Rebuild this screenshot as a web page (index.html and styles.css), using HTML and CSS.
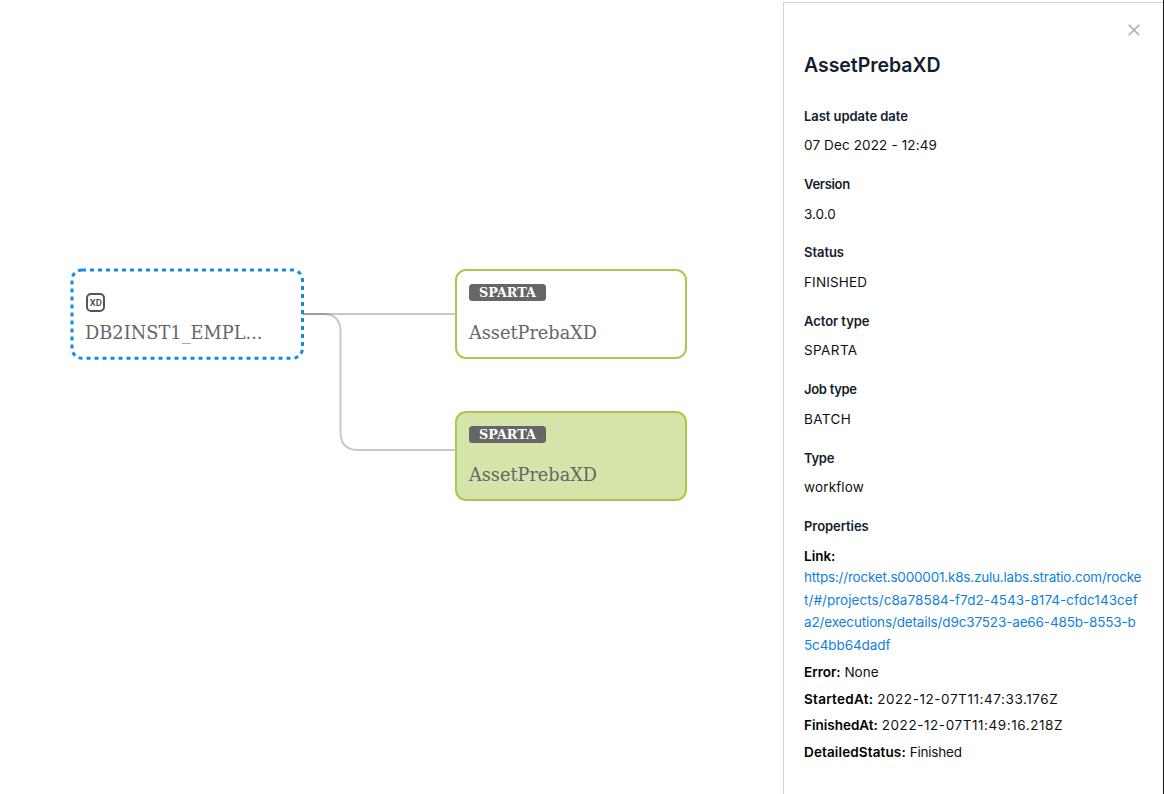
FILE: index.html
```html
<!DOCTYPE html>
<html lang="en">
<head>
<meta charset="utf-8">
<title>AssetPrebaXD</title>
<link rel="stylesheet" href="styles.css">
</head>
<body>
<main class="layout">
  <svg class="graph" width="783" height="794" viewBox="0 0 783 794">
    <path class="edge" d="M302 314H456"/>
    <path class="edge" d="M302 314H323Q340.500 314 340.500 332V432Q340.500 450 358 450H456"/>
    <rect class="node source" x="72" y="270" width="230.500" height="88.300" rx="10"/>
    <rect class="xd-frame" x="87" y="294" width="17" height="17" rx="4"/>
    <text class="xd-text" x="89.800" y="306.300" textLength="12" lengthAdjust="spacingAndGlyphs">XD</text>
    <text class="node-name" x="85" y="339" textLength="177.500" lengthAdjust="spacingAndGlyphs">DB2INST1_EMPL...</text>
    <rect class="node" x="456" y="270" width="230" height="88" rx="10"/>
    <rect class="tag" x="469" y="284" width="77" height="17" rx="3.500"/>
    <text class="tag-text" x="479" y="297" textLength="57" lengthAdjust="spacingAndGlyphs">SPARTA</text>
    <text class="node-name" x="469" y="339" textLength="128" lengthAdjust="spacingAndGlyphs">AssetPrebaXD</text>
    <rect class="node selected" x="456" y="412" width="230" height="88" rx="10"/>
    <rect class="tag" x="469" y="426" width="77" height="17" rx="3.500"/>
    <text class="tag-text" x="479" y="439" textLength="57" lengthAdjust="spacingAndGlyphs">SPARTA</text>
    <text class="node-name" x="469" y="481" textLength="128" lengthAdjust="spacingAndGlyphs">AssetPrebaXD</text>
  </svg>
  <aside class="panel">
    <svg class="close" width="12" height="12" viewBox="0 0 12 12"><path d="M.7.7l10.600 10.600M11.300.7L.7 11.300"/></svg>
    <h1 class="title">AssetPrebaXD</h1>
    <dl class="details">
      <div class="field"><dt>Last update date</dt><dd class="date">07 Dec 2022 - 12:49</dd></div>
      <div class="field"><dt class="tight">Version</dt><dd>3.0.0</dd></div>
      <div class="field"><dt>Status</dt><dd class="caps">FINISHED</dd></div>
      <div class="field"><dt>Actor type</dt><dd class="caps wide">SPARTA</dd></div>
      <div class="field"><dt class="tight">Job type</dt><dd class="caps wide">BATCH</dd></div>
      <div class="field"><dt class="tight">Type</dt><dd class="caps">workflow</dd></div>
    </dl>
    <h2 class="subtitle">Properties</h2>
    <div class="property link-label"><b>Link:</b></div>
    <a class="link"><span class="l1">https://rocket.s000001.k8s.zulu.labs.stratio.com/rocke</span><span class="l2">t/#/projects/c8a78584-f7d2-4543-8174-cfdc143cef</span><span class="l3">a2/executions/details/d9c37523-ae66-485b-8553-b</span><span class="l4">5c4bb64dadf</span></a>
    <div class="properties">
      <div class="property"><b>Error:</b> <span>None</span></div>
      <div class="property"><b class="started">StartedAt:</b> <span class="stamp">2022-12-07T11:47:33.176Z</span></div>
      <div class="property"><b>FinishedAt:</b> <span class="stamp">2022-12-07T11:49:16.218Z</span></div>
      <div class="property"><b class="detailed">DetailedStatus:</b> <span class="finished">Finished</span></div>
    </div>
  </aside>
</main>
</body>
</html>
```
FILE: styles.css
```css
* { box-sizing: border-box; }
body { margin: 0; background: #fff; }
.layout { display: flex; width: 1164px; height: 794px; overflow: hidden; border-right: 1px solid #14171c; }
.graph { flex: none; display: block; }
.edge { fill: none; stroke: #000; stroke-opacity: .21; stroke-width: 2; }
.node { fill: #fff; stroke: #aac94c; stroke-width: 2; }
.node.source { stroke: #128be3; stroke-width: 3; stroke-dasharray: 4 4; }
.node.selected { fill: #d5e4a9; }
.node-name { font: 18px "DejaVu Serif", serif; fill: #666; }
.tag { fill: #666; }
.tag-text { font: bold 13px "DejaVu Serif", serif; fill: #fff; }
.xd-frame { fill: #fff; stroke: #555; stroke-width: 2; }
.xd-text { font: 500 9px Roboto, sans-serif; fill: #444; }
.panel { flex: none; width: 380px; margin-top: 2px; padding: 21px 20px 0; border: solid #ccd4de; border-width: 1px 0 0 1px; display: flex; flex-direction: column; font: 13.500px/20px Inter, sans-serif; font-feature-settings: "calt" 0; color: #111; }
.close { align-self: flex-end; margin-right: 3.500px; fill: none; stroke: #aaa; stroke-width: 1.500; }
.title { margin: 15px 0 0; font-size: 19.500px; line-height: 28px; font-weight: 600; letter-spacing: -.05px; color: #121e2b; }
.details { margin: 26.800px 0 0; }
.field { height: 68.350px; }
.field dt, .subtitle { margin: 0; font-size: 13px; line-height: 20px; font-weight: 600; letter-spacing: -.05px; color: #121e2b; }
.field dt.tight { letter-spacing: -.3px; }
.field dd { margin: 9.500px 0 0; }
.field dd.date { letter-spacing: .13px; }
.field dd.caps { letter-spacing: .15px; }
.field dd.wide { letter-spacing: .4px; }
.link-label { margin-top: 10.200px; }
.property { height: 20px; white-space: nowrap; }
.property b { font-weight: 600; color: #000; }
.property .started { letter-spacing: .28px; }
.property .detailed { letter-spacing: .13px; }
.property .stamp { letter-spacing: .57px; }
.property .finished { letter-spacing: -.2px; }
.link { color: #0f7fe0; }
.link span { display: block; width: max-content; height: 22.600px; line-height: 22.600px; white-space: nowrap; }
.link .l1 { letter-spacing: -.2px; }
.link .l2 { letter-spacing: .05px; }
.link .l3 { letter-spacing: -.14px; }
.link .l4 { letter-spacing: -.1px; }
.properties { display: grid; gap: 6.650px; margin-top: 5.600px; }
```
